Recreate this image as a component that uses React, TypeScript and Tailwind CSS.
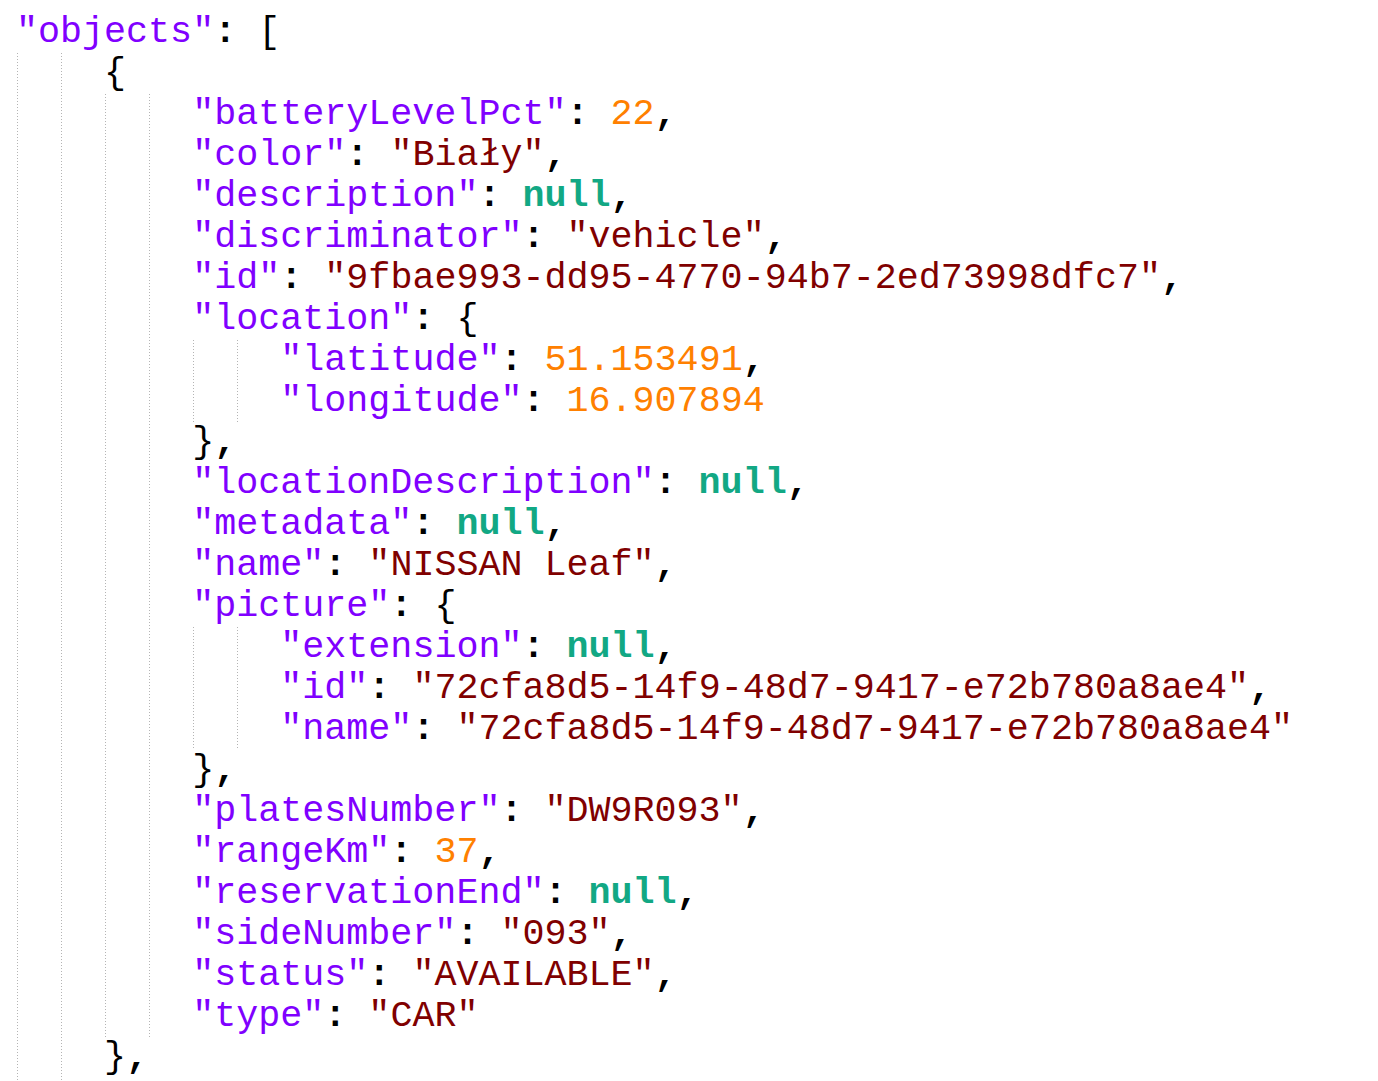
import React from "react";

type Tok = { t: string; c?: "key" | "str" | "num" | "nul" | "op" };

const colorOf: Record<string, string> = {
  key: "text-[#8000ff]",
  str: "text-[#800000]",
  num: "text-[#ff8000]",
  nul: "text-[#12a884] font-bold",
  op: "text-black font-bold",
};

const Line = ({ toks }: { toks: Tok[] }) => (
  <div className="h-[41px] leading-[41px] whitespace-pre">
    {toks.map((k, i) => (
      <span key={i} className={k.c ? colorOf[k.c] : "text-black"}>
        {k.t}
      </span>
    ))}
  </div>
);

const Guide = () => (
  <div className="w-px bg-[repeating-linear-gradient(to_bottom,#b4b4b4_0px,#b4b4b4_1px,transparent_1px,transparent_3px)]" />
);

const Block = ({ children, grow }: { children: React.ReactNode; grow?: boolean }) => (
  <div className={grow ? "flex flex-1" : "flex"}>
    <div className="w-[88.1px] shrink-0 flex pl-[1px]">
      <Guide />
      <div className="w-[43px]" />
      <Guide />
    </div>
    <div className="flex-1">{children}</div>
  </div>
);

const k = (s: string): Tok => ({ t: `"${s}"`, c: "key" });
const s = (v: string): Tok => ({ t: `"${v}"`, c: "str" });
const n = (v: string): Tok => ({ t: v, c: "num" });
const nul: Tok = { t: "null", c: "nul" };
const colon: Tok = { t: ":", c: "op" };
const sp: Tok = { t: " " };
const comma: Tok = { t: ",", c: "op" };

const prop = (key: string, val: Tok, last?: boolean) => (
  <Line toks={last ? [k(key), colon, sp, val] : [k(key), colon, sp, val, comma]} />
);

export default function App() {
  return (
    <div
      className="h-[1081px] w-[1378px] overflow-hidden bg-white pl-[16px] pt-[12px] flex flex-col text-[36.7px]"
      style={{ fontFamily: '"Liberation Mono", "Courier New", monospace' }}
    >
      <Line toks={[k("objects"), colon, sp, { t: "[" }]} />
      <Block grow>
        <Line toks={[{ t: "{" }]} />
        <Block>
          {prop("batteryLevelPct", n("22"))}
          {prop("color", s("Biały"))}
          {prop("description", nul)}
          {prop("discriminator", s("vehicle"))}
          {prop("id", s("9fbae993-dd95-4770-94b7-2ed73998dfc7"))}
          <Line toks={[k("location"), colon, sp, { t: "{" }]} />
          <Block>
            {prop("latitude", n("51.153491"))}
            {prop("longitude", n("16.907894"), true)}
          </Block>
          <Line toks={[{ t: "}" }, comma]} />
          {prop("locationDescription", nul)}
          {prop("metadata", nul)}
          {prop("name", s("NISSAN Leaf"))}
          <Line toks={[k("picture"), colon, sp, { t: "{" }]} />
          <Block>
            {prop("extension", nul)}
            {prop("id", s("72cfa8d5-14f9-48d7-9417-e72b780a8ae4"))}
            {prop("name", s("72cfa8d5-14f9-48d7-9417-e72b780a8ae4"), true)}
          </Block>
          <Line toks={[{ t: "}" }, comma]} />
          {prop("platesNumber", s("DW9R093"))}
          {prop("rangeKm", n("37"))}
          {prop("reservationEnd", nul)}
          {prop("sideNumber", s("093"))}
          {prop("status", s("AVAILABLE"))}
          {prop("type", s("CAR"), true)}
        </Block>
        <Line toks={[{ t: "}" }, comma]} />
      </Block>
    </div>
  );
}
